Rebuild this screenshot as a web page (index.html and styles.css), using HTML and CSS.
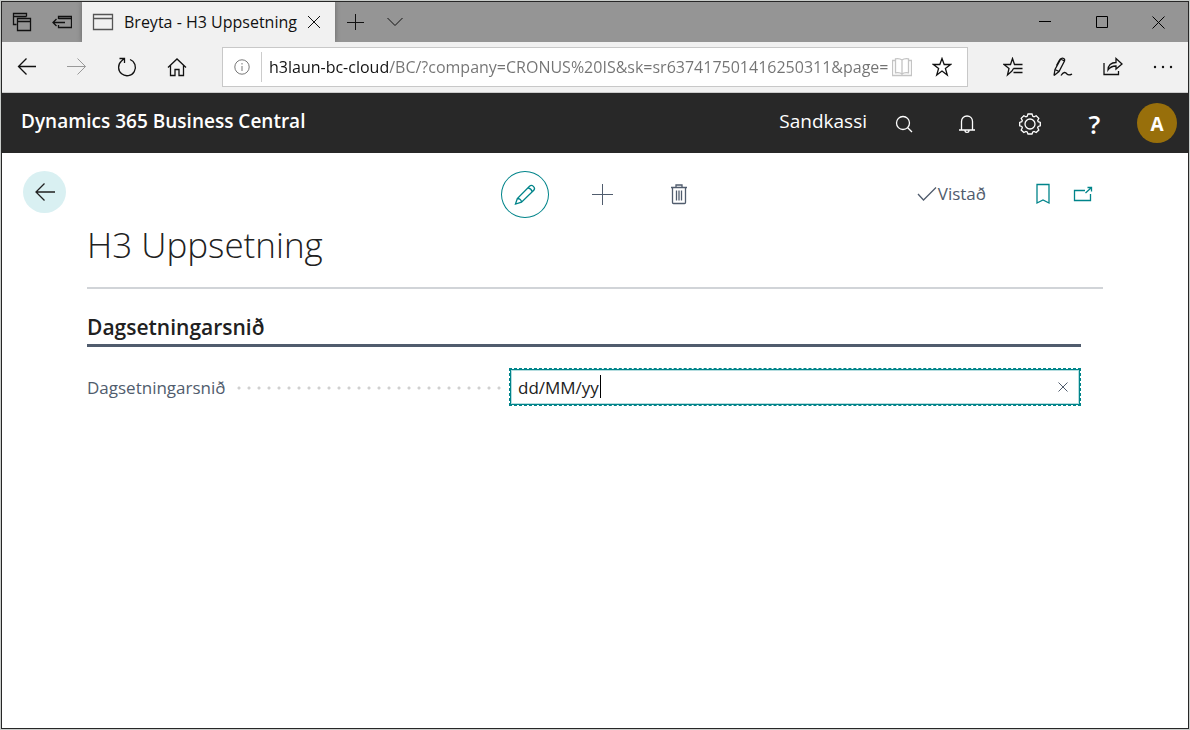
FILE: index.html
```html
<!DOCTYPE html>
<html lang="is">
<head>
<meta charset="utf-8">
<meta name="viewport" content="width=device-width, initial-scale=1">
<title>Breyta - H3 Uppsetning</title>
<link rel="stylesheet" href="styles.css">
</head>
<body>
<div class="window">
  <div class="tabbar">
    <button class="tab-tool" type="button" aria-label="Tabs set aside">
      <svg width="20" height="20" viewBox="0 0 20 20"><path d="M4.500 12.500H1.500V1.500H14.500V4.500M1.500 4.500H14.500M5.500 6.500H18.500V18.500H5.500ZM5.500 9.500H18.500"/></svg>
    </button>
    <button class="tab-tool" type="button" aria-label="Set tabs aside">
      <svg width="20" height="20" viewBox="0 0 20 20"><path d="M6.500 7V4.500H19.500V15.500H6.500V13M6.500 6.500H19.500M1 10.500H13M4.500 7L1 10.500L4.500 14"/></svg>
    </button>
    <div class="tab">
      <svg width="22" height="18" viewBox="0 0 22 18"><path d="M1.500 1.500H20.500V16.500H1.500ZM1.500 5.500H20.500"/></svg>
      <span class="tab-title">Breyta - H3 Uppsetning</span>
      <button class="tab-close" type="button" aria-label="Close tab">
        <svg class="thin" width="14" height="14" viewBox="0 0 14 14"><path d="M1 1L13 13M13 1L1 13"/></svg>
      </button>
    </div>
    <button class="tab-tool" type="button" aria-label="New tab">
      <svg class="thin" width="18" height="18" viewBox="0 0 18 18"><path d="M9.500 1V17M1 9.500H18"/></svg>
    </button>
    <button class="tab-tool" type="button" aria-label="Tab previews">
      <svg class="thin" width="18" height="12" viewBox="0 0 18 12"><path d="M1.500 2L9 9.500L16.500 2"/></svg>
    </button>
    <div class="window-controls">
      <button type="button" aria-label="Minimize"><svg class="thin" width="12" height="12" viewBox="0 0 12 12"><path d="M0 5.500H12"/></svg></button>
      <button type="button" aria-label="Maximize"><svg class="thin" width="12" height="12" viewBox="0 0 12 12"><path d="M.5 .5H11.500V11.500H.5Z"/></svg></button>
      <button type="button" aria-label="Close"><svg class="thin" width="13" height="13" viewBox="0 0 13 13"><path d="M.5 .5L12.500 12.500M12.500 .5L.5 12.500"/></svg></button>
    </div>
  </div>

  <div class="navbar">
    <button class="nav-button" type="button" aria-label="Back"><svg width="20" height="20" viewBox="0 0 20 20"><path d="M19 9.500H1.500M9.500 1.500L1.500 9.500L9.500 17.500"/></svg></button>
    <button class="nav-button disabled" type="button" aria-label="Forward" disabled><svg class="thin" width="20" height="20" viewBox="0 0 20 20"><path d="M0 9.500H18.500M10.500 1.500L18.500 9.500L10.500 17.500"/></svg></button>
    <button class="nav-button" type="button" aria-label="Refresh"><svg width="20" height="20" viewBox="0 0 20 20"><path d="M13 2.500A8.400 8.400 0 1 1 4.500 4L7 1.800M2.500 1.500H7.500V6"/></svg></button>
    <button class="nav-button" type="button" aria-label="Home"><svg width="20" height="20" viewBox="0 0 20 20"><path d="M1 10.500L10 2L19 10.500M3.500 8.500V18.500H8V12.500H12V18.500H16.500V8.500"/></svg></button>
    <div class="address">
      <button class="address-icon info" type="button" aria-label="Site information"><svg class="thin" width="16" height="16" viewBox="0 0 16 16"><circle cx="8" cy="8" r="7.200"/><path d="M8 7V12M8 4V5.500"/></svg></button>
      <input class="address-input" type="text" aria-label="Address" value="h3laun-bc-cloud/BC/?company=CRONUS%20IS&amp;sk=sr637417501416250311&amp;page=">
      <button class="address-icon reading" type="button" aria-label="Reading view"><svg width="20" height="20" viewBox="0 0 20 20"><path d="M3.500 3.500H.5V18.500H19.500V3.500H16.500M10 3C8 1.300 5.500 1.500 3.500 1.800V15.800C6 15.500 8.500 15.500 10 17C11.500 15.500 14 15.500 16.500 15.800V1.800C14.500 1.500 12 1.300 10 3V17"/></svg></button>
      <button class="address-icon" type="button" aria-label="Add to favorites"><svg width="20" height="20" viewBox="0 0 20 20"><path d="M10 1.500L12.200 7.500H18.500L13.400 11.400L15.300 18L10 14.100L4.700 18L6.600 11.400L1.500 7.500H7.800Z"/></svg></button>
    </div>
    <button class="nav-button" type="button" aria-label="Favorites"><svg width="20" height="20" viewBox="0 0 20 20"><path d="M9 14L4.500 18L6 11.500L1 7.500H7.500L9.500 1.500L11.500 7.500H19.500M10.500 11.500H19.500M10.500 15.500H19.500M10.500 11.500L9 14"/></svg></button>
    <button class="nav-button" type="button" aria-label="Add notes"><svg width="20" height="20" viewBox="0 0 20 20"><path d="M1 18.500L2 12.500L7.500 2.500C8.500 .5 12.500 .8 11.500 4L6 14.500L1 18.500M3.500 8.500L6.500 3C7 2 8 1.500 9 1.500M8.500 2.500L11.500 4M2 12.500L6 14.500M8 18.500C10.500 14.500 12.500 15 14 17C15.500 18.800 17 18 19 17"/></svg></button>
    <button class="nav-button" type="button" aria-label="Share"><svg width="20" height="20" viewBox="0 0 20 20"><path d="M1 6V17.500H15.500V14M5 13C5 8.500 8 5.500 13 5.500V1.500L19 7L13 12V9C9.500 9 7 10 5 13Z"/></svg></button>
    <button class="nav-button more" type="button" aria-label="More"><svg width="20" height="20" viewBox="0 0 20 20"><circle cx="2" cy="10" r="1.200"/><circle cx="10" cy="10" r="1.200"/><circle cx="18" cy="10" r="1.200"/></svg></button>
  </div>

  <header class="app-header">
    <span class="app-name">Dynamics 365 Business Central</span>
    <span class="company">Sandkassi</span>
    <button class="header-button" type="button" aria-label="Search"><svg width="18" height="18" viewBox="0 0 18 18"><circle cx="8" cy="8" r="6.500"/><path d="M12.700 12.700L17 17"/></svg></button>
    <button class="header-button" type="button" aria-label="Notifications"><svg width="18" height="20" viewBox="0 0 18 20"><path d="M1 16H17M3.500 16V7.500C3.500 4 6 2 9 2S14.500 4 14.500 7.500V16M7 16.500C7 19 11 19 11 16.500"/></svg></button>
    <button class="header-button" type="button" aria-label="Settings"><svg width="24" height="24" viewBox="0 0 24 24"><circle cx="12" cy="12" r="5"/><path d="M10 2H14L14.800 4.300L16 4.800L18.200 3.700L20.800 6.300L19.700 8.500L20.200 9.700L22.300 10.500V13.800L20.200 14.500L19.700 15.700L20.800 18L18.200 20.500L16 19.400L14.800 19.900L14 22H10L9.200 19.900L8 19.400L5.800 20.500L3.200 18L4.300 15.700L3.800 14.500L1.700 13.800V10.500L3.800 9.700L4.300 8.500L3.200 6.300L5.800 3.700L8 4.800L9.200 4.300Z"/></svg></button>
    <button class="header-button help" type="button" aria-label="Help">?</button>
    <button class="avatar" type="button" aria-label="Account">A</button>
  </header>

  <main class="page">
    <button class="back" type="button" aria-label="Back"><svg width="22" height="20" viewBox="0 0 22 20"><path d="M21 10H2M10.500 1.500L2 10L10.500 18.500"/></svg></button>
    <div class="content">
      <div class="actions">
        <div class="actions-main">
          <button class="action edit" type="button" aria-label="Edit"><svg width="24" height="24" viewBox="0 0 24 24"><path d="M2.500 21L4.300 15.500L16.500 3.200C19 1 23 4.500 20.800 7.300L8.500 19.200ZM4.300 15.500C6.500 15.500 8.500 17 8.500 19.200M15 4.800C17 5.200 18.800 6.800 19.200 8.800"/></svg></button>
          <button class="action" type="button" aria-label="New"><svg class="thin" width="21" height="21" viewBox="0 0 21 21"><path d="M10.500 0V21M0 10.500H21"/></svg></button>
          <button class="action" type="button" aria-label="Delete"><svg width="18" height="22" viewBox="0 0 18 22"><path d="M1 3.500H17M6 3.500V1H12V3.500M2.500 3.500V18.500Q2.500 19.500 3.500 19.500H14.500Q15.500 19.500 15.500 18.500V3.500M6.500 6.500V16.500M9 6.500V16.500M11.500 6.500V16.500"/></svg></button>
        </div>
        <div class="actions-side">
          <span class="saved"><svg width="20" height="16" viewBox="0 0 20 16"><path d="M1 8L6.500 14L19 1.500"/></svg>Vistað</span>
          <button class="action-small" type="button" aria-label="Bookmark"><svg width="14" height="22" viewBox="0 0 14 22"><path d="M1 1.500H13V20L7 17L1 20Z"/></svg></button>
          <button class="action-small" type="button" aria-label="Open in new window"><svg width="20" height="16" viewBox="0 0 20 16"><path d="M12 4.500H1.500V14.500H17.500V8M12.500 7L18.500 1.500M14.500 1.500H18.500V5.500"/></svg></button>
        </div>
      </div>
      <h1 class="title">H3 Uppsetning</h1>
      <section class="group">
        <h2 class="group-title">Dagsetningarsnið</h2>
        <div class="field">
          <label class="field-label" for="date-format">Dagsetningarsnið</label>
          <div class="field-box">
            <input id="date-format" class="field-input" type="text" value="dd/MM/yy">
            <span class="caret"></span>
            <button class="clear" type="button" aria-label="Clear"><svg class="thin" width="10" height="10" viewBox="0 0 10 10"><path d="M.5 .5L9.500 9.500M9.500 .5L.5 9.500"/></svg></button>
          </div>
        </div>
      </section>
    </div>
  </main>
</div>
</body>
</html>
```
FILE: styles.css
```css
* {
  box-sizing: border-box;
}

body {
  margin: 0;
  padding: 1px;
  min-height: 100vh;
  display: flex;
  background: #c9ccca;
  color: #212121;
  font-family: "Open Sans", "Segoe UI", sans-serif;
}

button {
  display: flex;
  align-items: center;
  justify-content: center;
  flex: none;
  margin: 0;
  padding: 0;
  border: 0;
  background: none;
  color: inherit;
  font: inherit;
}

input {
  min-width: 0;
  margin: 0;
  padding: 0;
  border: 0;
  outline: 0;
  background: none;
  font: inherit;
}

svg {
  display: block;
  flex: none;
  fill: none;
  stroke: currentColor;
  stroke-width: 1.3;
}

.thin {
  stroke-width: 1;
}

.window {
  flex: 1;
  min-width: 0;
  display: flex;
  flex-direction: column;
  border: 1px solid #272727;
  background: #fff;
}

/* Browser tabs */
.tabbar {
  display: flex;
  height: 40px;
  background: #959595;
  color: #111;
}

.tab-tool {
  width: 40px;
}

.tab {
  display: flex;
  align-items: center;
  width: 253px;
  padding: 0 14px 0 10px;
  background: #f1f1f1;
  box-shadow: 0 0 5px #666;
  clip-path: inset(0 -6px);
}

.tab > svg {
  color: #555;
}

.tab-title {
  flex: 1;
  margin-left: 10px;
  font-size: 16px;
  white-space: nowrap;
}

.window-controls {
  display: flex;
  margin-left: auto;
  padding-right: 1px;
  color: #000;
}

.window-controls button {
  width: 57px;
}

/* Browser navigation */
.navbar {
  display: flex;
  height: 51px;
  border-bottom: 1px solid #ccc;
  background: #f1f1f1;
  color: #111;
}

.nav-button {
  width: 50px;
}

.nav-button.disabled {
  color: #999;
}

.nav-button.more svg {
  fill: currentColor;
  stroke: none;
}

.address {
  flex: 1;
  min-width: 0;
  display: flex;
  align-items: center;
  height: 40px;
  margin: 5px 20px;
  padding-right: 5px;
  border: 1px solid #c8c8c8;
  background: #fff;
}

.address-icon {
  width: 40px;
  height: 30px;
}

.address-icon.info {
  width: 39px;
  border-right: 1px solid #ccc;
  color: #777;
}

.address-icon.reading {
  width: 24px;
  margin-right: 8px;
  color: #c4c4c4;
}

.address-input {
  flex: 1;
  padding-left: 7px;
  background: linear-gradient(to right, #111 127px, #737373 127px);
  background-clip: text;
  color: transparent;
  font-size: 16px;
}

/* Application header */
.app-header {
  display: flex;
  align-items: center;
  height: 60px;
  padding: 0 11px 0 19px;
  background: #282828;
  color: #fff;
}

.app-name,
.company {
  padding-bottom: 4px;
  font-size: 19px;
  white-space: nowrap;
}

.app-name {
  flex: 1;
  font-weight: 600;
}

.company {
  margin-right: 5px;
}

.header-button {
  width: 63px;
  height: 60px;
  padding-top: 2px;
}

.header-button.help {
  padding-left: 4px;
  font-size: 26px;
  font-weight: 600;
}

.avatar {
  width: 40px;
  height: 40px;
  margin-left: 13px;
  padding-top: 2px;
  border-radius: 50%;
  background: #986f0b;
  font-size: 19px;
  font-weight: 700;
}

/* Page */
.page {
  flex: 1;
  display: flex;
  align-items: flex-start;
  padding: 18px 85px 18px 21px;
}

.back {
  width: 43px;
  height: 42px;
  border-radius: 50%;
  background: #d9f0f2;
}

.content {
  flex: 1;
  min-width: 0;
  margin-left: 21px;
}

.actions {
  display: grid;
  grid-template-columns: 1fr auto 1fr;
  align-items: center;
  color: #505c6d;
}

.actions-main {
  grid-column: 2;
  display: flex;
  gap: 29px;
  padding-left: 14px;
}

.action {
  width: 48px;
  height: 47px;
}

.action.edit {
  border: 1px solid #00848a;
  border-radius: 50%;
  color: #00848a;
}

.actions-side {
  display: flex;
  align-items: center;
  justify-content: flex-end;
  padding: 0 10px 2px 0;
}

.saved {
  display: flex;
  align-items: center;
  gap: 1px;
  margin-right: 50px;
  font-size: 17px;
}

.action-small {
  margin-left: 23px;
  color: #00848a;
}

.saved + .action-small {
  margin-left: 0;
}

.title {
  margin: 0;
  padding-bottom: 15px;
  border-bottom: 2px solid #d1d4d8;
  font-size: 35px;
  font-weight: 300;
  line-height: 54px;
}

.group {
  margin: 22px 22px 0 0;
}

.group-title {
  margin: 0;
  padding-bottom: 1px;
  border-bottom: 3px solid #505c6d;
  font-size: 21px;
  font-weight: 600;
  line-height: 32px;
}

.field {
  display: grid;
  grid-template-columns: 422fr 572fr;
  margin-top: 21px;
  font-size: 17px;
}

.field-label {
  display: flex;
  align-items: center;
  color: #505c6d;
}

.field-label::after {
  content: "";
  flex: 1;
  height: 10px;
  margin: 2px 8px 0 8px;
  background: radial-gradient(circle at 5px 5px, #d0d0d0 1px, transparent 2px) 0 0 / 10px 10px;
}

.field-box {
  position: relative;
  display: flex;
  height: 38px;
  border: 1px dashed #00848a;
  background: #fff;
  box-shadow: inset 0 0 0 1px #00848a, inset 0 0 0 2px #b5dddf;
}

.field-input {
  flex: 1;
  padding-left: 8px;
  color: #212121;
}

.caret {
  position: absolute;
  top: 6px;
  left: 90px;
  width: 1px;
  height: 23px;
  background: #000;
}

.clear {
  width: 34px;
  color: #505c6d;
}
```
